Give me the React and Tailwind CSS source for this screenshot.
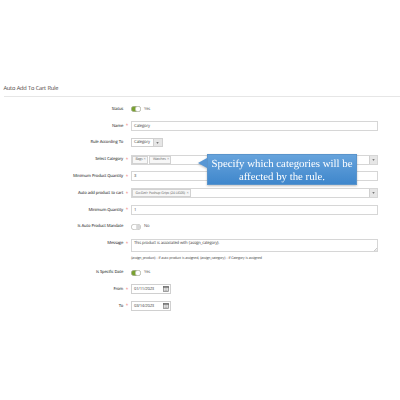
import React from 'react';

const font = "font-['Open_Sans','Noto_Sans',sans-serif] [text-rendering:geometricPrecision] [word-spacing:0.35px]";

function Row({ label, required, children }) {
  return (
    <div className="flex h-[16.82px] items-center">
      <div className="w-[123.1px] shrink-0 pt-[1.4px] text-right text-[4.2px] font-semibold tracking-[-0.25px] whitespace-nowrap text-[#555]">
        {label}
      </div>
      <div className="w-[7.9px] shrink-0 pt-[1px] text-center text-[4.5px] text-[#ea5050]">{required ? '*' : ''}</div>
      {children}
    </div>
  );
}

function Toggle({ on }) {
  return (
    <div className="flex items-center">
      <svg width="10" height="6" viewBox="0 0 10 6">
        <rect x="0.3" y="0.3" width="9.4" height="5.4" rx="2.7" fill={on ? '#79a22e' : '#fff'} stroke="#a8a8a2" strokeWidth="0.6" />
        {on ? (
          <circle cx="7" cy="3" r="2.7" fill="#fff" stroke="#b0b0a8" strokeWidth="0.5" />
        ) : (
          <path d="M5.2 0.6H7a2.4 2.4 0 0 1 0 4.8H5.2z" fill="#d8d8d8" />
        )}
      </svg>
      <span className="ml-[3px] pt-[1.4px] text-[4.2px] tracking-[-0.2px] text-[#555]">{on ? 'Yes' : 'No'}</span>
    </div>
  );
}

function Input({ value }) {
  return (
    <div className="flex h-[10px] w-[247px] items-center border border-[#d6d6d6] bg-white pt-[1.2px] pl-[2px] text-[4.2px] tracking-[-0.2px] text-[#444]">
      {value}
    </div>
  );
}

function Arrow({ width }) {
  return (
    <div className={`flex h-full shrink-0 items-center justify-center border-l border-[#d0d0d0] bg-[#e6e6e6] ${width}`}>
      <svg width="3" height="2" viewBox="0 0 3 2">
        <path d="M0.3 0.2h2.4L1.5 1.7z" fill="#555" />
      </svg>
    </div>
  );
}

function Tag({ text, width }) {
  return (
    <div className={`flex h-[8px] items-center justify-between border border-[#d2d2d2] bg-[#f7f7f7] pr-[1.5px] pl-[2.5px] whitespace-nowrap text-[#666] ${width}`}>
      <span className="pt-[1px]">{text}</span>
      <span className="pt-[0.8px] text-[4px] text-[#888]">×</span>
    </div>
  );
}

function MultiSelect({ children }) {
  return (
    <div className="flex h-[10px] w-[247px] items-center border border-[#d6d6d6] bg-white">
      <div className="flex flex-1 items-center gap-[1.5px] text-[3.6px] tracking-[-0.22px]">{children}</div>
      <Arrow width="w-[8px]" />
    </div>
  );
}

function DateInput({ value }) {
  return (
    <div className="flex h-[10px] w-[40px] items-center justify-between border border-[#d0d0d0] bg-white pr-px pl-[2px] text-[4.2px] tracking-[-0.22px] text-[#444]">
      <span className="pt-[1.2px]">{value}</span>
      <svg width="6" height="6" viewBox="0 0 6 6">
        <rect x="0.4" y="0.6" width="5.2" height="5" fill="#fff" stroke="#777" strokeWidth="0.7" />
        <path d="M0.2 1.1h5.6" stroke="#555" strokeWidth="1.1" />
        <path d="M1.3 2.9h3.4M1.3 4.3h3.4" stroke="#888" strokeWidth="0.7" />
      </svg>
    </div>
  );
}

function Callout() {
  return (
    <div className="absolute top-[154px] left-[198px] flex [word-spacing:0] drop-shadow-[0_1px_1px_rgba(0,0,0,0.25)]">
      <svg className="mt-[4px] shrink-0" width="9" height="10" viewBox="0 0 9 10">
        <path d="M0 5L9 0v10z" fill="#5796d4" />
      </svg>
      <div className="h-[31px] w-[150px] border border-[#5a94cb] bg-linear-to-b from-[#66a3dc] to-[#3f87cc] text-center font-['Liberation_Serif',serif] text-[10.8px] leading-[13.5px] whitespace-nowrap text-white">
        <div className="pt-[2.6px]">Specify which categories will be</div>
        <div>affected by the rule.</div>
      </div>
    </div>
  );
}

export default function App() {
  return (
    <div className={`relative h-[400px] w-[400px] overflow-hidden bg-white leading-none ${font}`}>
      <header className="ml-[3.5px] flex h-[97px] items-end border-b border-[#e6e6e6] pb-[4px]">
        <h1 className="text-[5.7px] tracking-[-0.24px] whitespace-nowrap text-[#4c443e]">Auto Add To Cart Rule</h1>
      </header>

      <div className="pt-[3.8px]">
        <Row label="Status"><Toggle on /></Row>
        <Row label="Name" required><Input value="Category" /></Row>
        <Row label="Rule According To">
          <div className="flex h-[9px] w-[32px] items-center justify-between border border-[#d0d0d0] bg-white pl-[2px] text-[4.2px] tracking-[-0.2px] text-[#444]">
            <span className="pt-[1.2px]">Category</span>
            <Arrow width="w-[9px]" />
          </div>
        </Row>
        <Row label="Select Category" required>
          <MultiSelect>
            <Tag text="Bags" width="w-[16px]" />
            <Tag text="Watches" width="w-[22px]" />
          </MultiSelect>
        </Row>
        <Row label="Minimum Product Quantity" required><Input value="3" /></Row>
        <Row label="Auto add product to cart" required>
          <MultiSelect>
            <Tag text="Go-Get'r Pushup Grips (24-UG05)" width="w-[59px]" />
          </MultiSelect>
        </Row>
        <Row label="Minimum Quantity" required><Input value="1" /></Row>
        <Row label="Is Auto Product Mandate"><Toggle /></Row>

        <div className="flex h-[28.8px] pt-[4px]">
          <div className="w-[123.1px] pt-[2.7px] text-right text-[4.2px] font-semibold tracking-[-0.25px] text-[#555]">Message</div>
          <div className="w-[7.9px] pt-[2.5px] text-center text-[4.5px] text-[#ea5050]">*</div>
          <div>
            <div className="flex h-[13px] w-[247px] items-start justify-between border border-[#d6d6d6] pt-[2px] pl-[2px] text-[4.2px] tracking-[-0.25px] text-[#444]">
              <span>This product is associated with {'{assign_category}'}.</span>
              <svg className="self-end" width="3" height="3" viewBox="0 0 3 3">
                <path d="M0 3L3 0M1.5 3L3 1.5" stroke="#999" strokeWidth="0.5" />
              </svg>
            </div>
            <p className="mt-[4.8px] text-[3.6px] tracking-[-0.22px] whitespace-nowrap text-[#444]">
              {'{assign_product}'} - If auto product is assigned, {'{assign_category}'} - If Category is assigned
            </p>
          </div>
        </div>

        <Row label="Is Specific Date"><Toggle on /></Row>
        <Row label="From" required><DateInput value="01/11/2023" /></Row>
        <Row label="To" required><DateInput value="03/14/2023" /></Row>
      </div>

      <Callout />
    </div>
  );
}
